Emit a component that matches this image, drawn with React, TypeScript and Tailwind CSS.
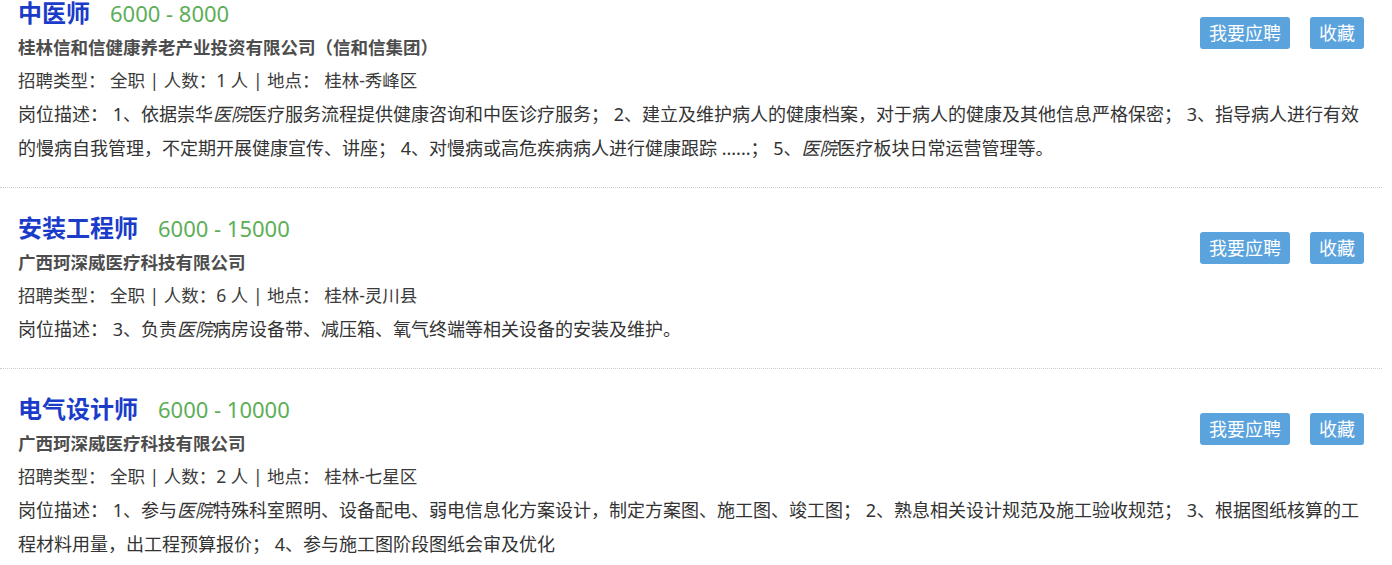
import React from "react";

type Job = {
  title: string;
  salary: string;
  company: string;
  count: number;
  place: string;
  desc: React.ReactNode;
};

const Em = ({ children }: { children: React.ReactNode }) => <em className="italic">{children}</em>;

const jobs: Job[] = [
  {
    title: "中医师",
    salary: "6000 - 8000",
    company: "桂林信和信健康养老产业投资有限公司（信和信集团）",
    count: 1,
    place: "桂林-秀峰区",
    desc: (
      <>
        1、依据崇华<Em>医院</Em>医疗服务流程提供健康咨询和中医诊疗服务； 2、建立及维护病人的健康档案，对于病人的健康及其他信息严格保密； 3、指导病人进行有效的慢病自我管理，不定期开展健康宣传、讲座； 4、对慢病或高危疾病病人进行健康跟踪 ......； 5、<Em>医院</Em>医疗板块日常运营管理等。
      </>
    ),
  },
  {
    title: "安装工程师",
    salary: "6000 - 15000",
    company: "广西珂深威医疗科技有限公司",
    count: 6,
    place: "桂林-灵川县",
    desc: (
      <>
        3、负责<Em>医院</Em>病房设备带、减压箱、氧气终端等相关设备的安装及维护。
      </>
    ),
  },
  {
    title: "电气设计师",
    salary: "6000 - 10000",
    company: "广西珂深威医疗科技有限公司",
    count: 2,
    place: "桂林-七星区",
    desc: (
      <>
        1、参与<Em>医院</Em>特殊科室照明、设备配电、弱电信息化方案设计，制定方案图、施工图、竣工图； 2、熟息相关设计规范及施工验收规范； 3、根据图纸核算的工程材料用量，出工程预算报价； 4、参与施工图阶段图纸会审及优化
      </>
    ),
  },
];

const JobItem = ({ job }: { job: Job }) => (
  <div className="pl-[18px] pr-[18px] pt-[23px] pb-[22px] border-b border-dotted border-[#cfcfcf]">
    <div className="flex items-start justify-between">
      <div>
        <div className="flex items-baseline gap-[20px] leading-[34px]">
          <span className="text-[24px] font-bold text-[#1a3cc9]">{job.title}</span>
          <span className="text-[22px] text-[#5cae57]">{job.salary}</span>
        </div>
        <div className="text-[17.5px] leading-[34px] font-bold text-[#4d4d4d]">{job.company}</div>
        <div className="text-[17.5px] leading-[33px] text-[#3a3a3a]">
          招聘类型： 全职 | 人数：{job.count} 人 | 地点： {job.place}
        </div>
      </div>
      <div className="mt-[21px] flex gap-[20px]">
        <button className="h-[32px] px-[9px] rounded-[3px] bg-[#5ba3dd] text-white text-[18px] leading-[32px]">
          我要应聘
        </button>
        <button className="h-[32px] px-[9px] rounded-[3px] bg-[#5ba3dd] text-white text-[18px] leading-[32px]">
          收藏
        </button>
      </div>
    </div>
    <p className="text-[18px] leading-[34px] text-[#333]">岗位描述： {job.desc}</p>
  </div>
);

export default function App() {
  return (
    <div className="h-[565px] overflow-hidden bg-white font-['Noto_Sans','Noto_Sans_CJK_SC',sans-serif]">
      <div className="w-[1382px] -mt-[27px]">
        {jobs.map((job, i) => (
          <JobItem key={i} job={job} />
        ))}
      </div>
    </div>
  );
}
